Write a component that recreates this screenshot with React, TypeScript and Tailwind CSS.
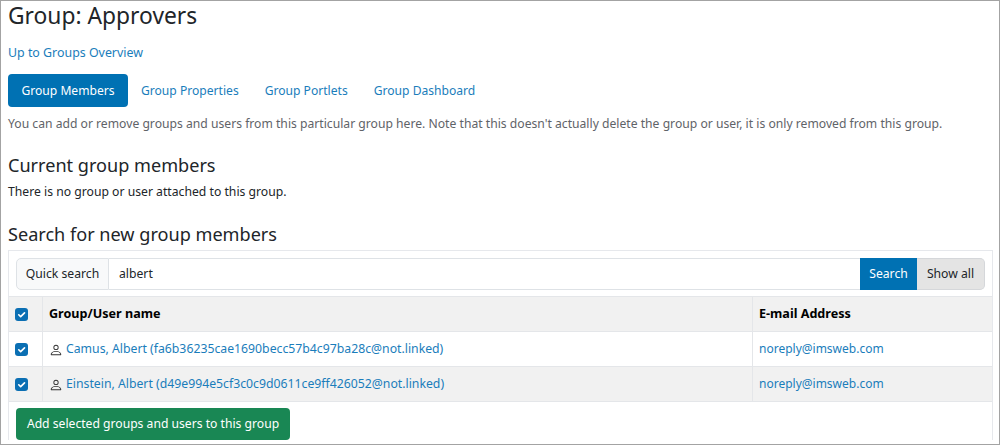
import { BsPerson } from 'react-icons/bs'

const rows = [
  { name: 'Camus, Albert (fa6b36235cae1690becc57b4c97ba28c@not.linked)', striped: false },
  { name: 'Einstein, Albert (d49e994e5cf3c0c9d0611ce9ff426052@not.linked)', striped: true },
]

function Check() {
  return (
    <span className="flex h-[13px] w-[13px] items-center justify-center rounded-[3px] bg-[#0b6fb3]">
      <svg viewBox="0 0 20 20" className="h-[11px] w-[11px]" fill="none" stroke="#fff" strokeWidth="3" strokeLinecap="round" strokeLinejoin="round">
        <path d="M5 10.5l3.5 3.5 7-7" />
      </svg>
    </span>
  )
}

export default function App() {
  return (
    <div className="h-[445px] w-[1000px] overflow-hidden border border-[#a3a3a3] bg-white pl-[7px] pr-[6px] font-['Noto_Sans',sans-serif] text-[12.2px] text-[#212529]">
      <h1 className="mt-[-1px] h-[34px] text-[22.8px] leading-[32px]">Group: Approvers</h1>
      <div className="mt-[10px] h-[18px] text-[12.4px] leading-[18px]">
        <a className="text-[#1a7dbb]">Up to Groups Overview</a>
      </div>
      <nav className="mt-[12px] flex h-[33px] items-center text-[12.1px]">
        <a className="flex h-[33px] w-[120px] items-center justify-center rounded-[4px] bg-[#0071b3] pt-[1px] text-white">Group Members</a>
        <a className="ml-[13px] pt-[2px] text-[#1a7dbb]">Group Properties</a>
        <a className="ml-[26px] pt-[2px] text-[#1a7dbb]">Group Portlets</a>
        <a className="ml-[26px] pt-[2px] text-[#1a7dbb]">Group Dashboard</a>
      </nav>
      <p className="mt-[8px] h-[18px] text-[12.17px] leading-[18px] text-[#5f6368]">
        You can add or remove groups and users from this particular group here. Note that this doesn't actually delete the group or user, it is only removed from this group.
      </p>
      <h2 className="mt-[19px] h-[26px] text-[18.1px] leading-[26px]">Current group members</h2>
      <p className="mt-[5px] h-[18px] leading-[18px]">There is no group or user attached to this group.</p>
      <h2 className="mt-[20px] h-[26px] text-[18.1px] leading-[26px]">Search for new group members</h2>
      <div className="mt-[3px] border border-b-0 border-[#e6e8ec]">
        <div className="h-[45px] px-[7px] pt-[7px]">
          <div className="flex h-[32px] w-full items-stretch">
            <span className="flex w-[93px] items-center justify-center rounded-l-[5px] border border-[#dee2e6] bg-[#f8f9fa]">Quick search</span>
            <span className="flex flex-1 items-center border-y border-[#dee2e6] pl-[10px]">albert</span>
            <span className="flex w-[57px] items-center justify-center bg-[#0071b3] text-white">Search</span>
            <span className="flex w-[68px] items-center justify-center rounded-r-[5px] border border-l-0 border-[#d5d7da] bg-[#e4e4e4]">Show all</span>
          </div>
        </div>
        <div className="grid grid-cols-[34px_710px_1fr]">
          <div className="flex h-[36px] items-center border-y border-r border-[#e4e6e9] bg-[#f1f1f1] pl-[6px]"><Check /></div>
          <div className="flex h-[36px] items-center border-y border-r border-[#e4e6e9] bg-[#f1f1f1] pl-[6px] text-[12.6px] font-bold text-black">Group/User name</div>
          <div className="flex h-[36px] items-center border-y border-[#e4e6e9] bg-[#f1f1f1] pl-[6px] text-[12.6px] font-bold text-black">E-mail Address</div>
          {rows.map((row) => (
            <div key={row.name} className="contents">
              <div className={`flex h-[35px] items-center border-b border-r border-[#e4e6e9] pl-[6px] ${row.striped ? 'bg-[#f1f1f1]' : 'bg-white'}`}><Check /></div>
              <div className={`flex h-[35px] items-center border-b border-r border-[#e4e6e9] pl-[6px] ${row.striped ? 'bg-[#f1f1f1]' : 'bg-white'}`}>
                <BsPerson size={14} className="mr-[3px] mt-[2px] text-[#333]" />
                <a className="text-[12.26px] text-[#1a7dbb]">{row.name}</a>
              </div>
              <div className={`flex h-[35px] items-center border-b border-[#e4e6e9] pl-[6px] text-[12px] ${row.striped ? 'bg-[#f1f1f1]' : 'bg-white'}`}>
                <a className="text-[#1a7dbb]">noreply@imsweb.com</a>
              </div>
            </div>
          ))}
        </div>
        <div className="px-[7px] pt-[6px]">
          <button className="flex h-[32px] w-[274px] items-center justify-center rounded-[4px] bg-[#198754] text-[12.15px] text-white">Add selected groups and users to this group</button>
        </div>
      </div>
    </div>
  )
}
